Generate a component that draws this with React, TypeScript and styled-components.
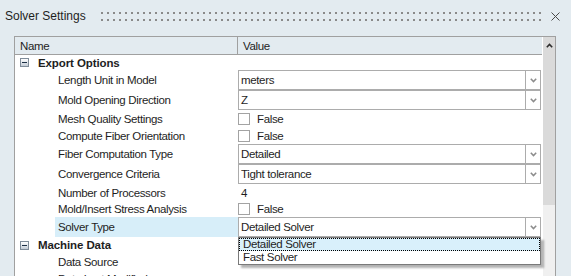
import React from "react";
import styled, { createGlobalStyle } from "styled-components";

const GlobalStyle = createGlobalStyle`
  html, body { margin: 0; padding: 0; }
  body {
    background: #e3ebf0;
    font-family: "Liberation Sans", Arial, sans-serif;
  }
`;

const Window = styled.div`
  width: 571px;
  height: 276px;
  overflow: hidden;
  display: flex;
  flex-direction: column;
  background: #e3ebf0;
`;

const TitleBar = styled.div`
  height: 36px;
  box-sizing: border-box;
  padding: 0 11px 4px 5px;
  display: flex;
  align-items: center;
  flex-shrink: 0;
`;

const Title = styled.span`
  font-size: 12px;
  color: #1e1e1e;
  white-space: nowrap;
`;

const Grip = styled.div`
  flex: 1;
  margin: 0 10px 0 15px;
  display: flex;
  flex-direction: column;
  gap: 5px;
`;

const GripRow = styled.div`
  height: 2px;
  background-image: linear-gradient(to right, #8a8a8a 2px, transparent 2px);
  background-size: 6px 2px;
`;

const CloseButton = styled.button`
  border: none;
  background: transparent;
  padding: 0;
  width: 9px;
  height: 9px;
  display: flex;
  cursor: pointer;
`;

const Panel = styled.div`
  flex: 1;
  min-height: 0;
  margin: 0 15px 0 14px;
  border: 1px solid #a0a0a0;
  border-bottom: none;
  background: #fff;
  display: flex;
  overflow: hidden;
`;

const Grid = styled.div`
  flex: 1;
  display: flex;
  flex-direction: column;
  font-size: 11.5px;
  letter-spacing: -0.35px;
  color: #1e1e1e;
`;

const Header = styled.div`
  height: 18px;
  box-sizing: border-box;
  display: grid;
  grid-template-columns: 223px 1fr;
  background: #e3ebf0;
  border-bottom: 1px solid #a0a0a0;
  flex-shrink: 0;
`;

const HeaderCell = styled.div<{ $divider?: boolean }>`
  display: flex;
  align-items: center;
  padding-left: 5px;
  border-right: ${(p) => (p.$divider ? "1px solid #a0a0a0" : "none")};
  white-space: nowrap;
`;

const CategoryRow = styled.div<{ $h: number }>`
  height: ${(p) => p.$h}px;
  display: flex;
  align-items: center;
  padding-left: 5px;
  gap: 9px;
  flex-shrink: 0;
`;

const CategoryTitle = styled.span`
  font-weight: bold;
  font-size: 11.5px;
  letter-spacing: -0.1px;
`;

const Toggle = styled.span`
  width: 9px;
  height: 9px;
  box-sizing: border-box;
  border: 1px solid #7f8c99;
  background: linear-gradient(#ffffff, #c3ccd6);
  display: flex;
  align-items: center;
  justify-content: center;
  &::before {
    content: "";
    width: 5px;
    height: 1px;
    background: #1c2f45;
  }
`;

const PropRow = styled.div<{ $h: number }>`
  height: ${(p) => p.$h}px;
  display: grid;
  grid-template-columns: 40px 183px 1fr;
  flex-shrink: 0;
`;

const Label = styled.div<{ $selected?: boolean }>`
  grid-column: 2;
  display: flex;
  align-items: center;
  padding-left: 3px;
  white-space: nowrap;
  overflow: hidden;
  background: ${(p) => (p.$selected ? "#d7eef9" : "transparent")};
`;

const ValueCell = styled.div`
  grid-column: 3;
  position: relative;
  display: flex;
  align-items: center;
  padding-right: 1px;
  white-space: nowrap;
`;

const PlainValue = styled.span`
  padding-left: 3px;
`;

const Combo = styled.div`
  flex: 1;
  height: 100%;
  box-sizing: border-box;
  border: 1px solid #acacac;
  background: #fff;
  display: flex;
`;

const ComboText = styled.div`
  flex: 1;
  display: flex;
  align-items: center;
  padding-left: 2px;
`;

const ComboButton = styled.div`
  width: 15px;
  box-sizing: border-box;
  border-left: 1px solid #acacac;
  display: flex;
  align-items: center;
  justify-content: center;
`;

const CheckWrap = styled.div`
  display: flex;
  align-items: center;
  gap: 7px;
`;

const CheckBox = styled.span`
  width: 12px;
  height: 12px;
  box-sizing: border-box;
  border: 1px solid #a3a3a3;
  background: #fff;
`;

const DropList = styled.div`
  position: absolute;
  top: 100%;
  left: 0;
  right: 1px;
  border: 1px solid #7a7a7a;
  background: #fff;
  box-shadow: 3px 3px 2px rgba(0, 0, 0, 0.3);
  z-index: 2;
`;

const DropItem = styled.div<{ $active?: boolean }>`
  height: 13px;
  box-sizing: border-box;
  line-height: 11px;
  padding-left: 3px;
  border: 1px dotted ${(p) => (p.$active ? "#000" : "transparent")};
  background: ${(p) => (p.$active ? "#d9f0fb" : "transparent")};
`;

const Scrollbar = styled.div`
  width: 12px;
  margin-left: 1px;
  display: flex;
  flex-direction: column;
  background: #f0f0f0;
`;

const ScrollButton = styled.div`
  height: 17px;
  background: #dadada;
  display: flex;
  align-items: center;
  justify-content: center;
`;

const ScrollThumb = styled.div`
  height: 151px;
  background: #dadada;
`;

const DownArrow = () => (
  <svg width="7" height="5" viewBox="0 0 7 5">
    <polyline points="0.8,0.8 3.5,3.6 6.2,0.8" fill="none" stroke="#8c8c8c" strokeWidth="1.5" />
  </svg>
);

const UpArrow = () => (
  <svg width="7" height="5" viewBox="0 0 7 5">
    <polyline points="0.8,4.2 3.5,1.4 6.2,4.2" fill="none" stroke="#2d2d2d" strokeWidth="1.6" />
  </svg>
);

const ComboBox = ({ value }: { value: string }) => (
  <Combo>
    <ComboText>{value}</ComboText>
    <ComboButton>
      <DownArrow />
    </ComboButton>
  </Combo>
);

const Check = ({ label }: { label: string }) => (
  <CheckWrap>
    <CheckBox />
    <span>{label}</span>
  </CheckWrap>
);

export default function App() {
  return (
    <>
      <GlobalStyle />
      <Window>
        <TitleBar>
          <Title>Solver Settings</Title>
          <Grip>
            <GripRow />
            <GripRow />
          </Grip>
          <CloseButton aria-label="Close">
            <svg width="9" height="9" viewBox="0 0 9 9">
              <path d="M0.5 0.5 L8.5 8.5 M8.5 0.5 L0.5 8.5" stroke="#4a4a4a" strokeWidth="1" />
            </svg>
          </CloseButton>
        </TitleBar>
        <Panel>
          <Grid>
            <Header>
              <HeaderCell $divider>Name</HeaderCell>
              <HeaderCell>Value</HeaderCell>
            </Header>
            <CategoryRow $h={15}>
              <Toggle />
              <CategoryTitle>Export Options</CategoryTitle>
            </CategoryRow>
            <PropRow $h={20}>
              <Label>Length Unit in Model</Label>
              <ValueCell>
                <ComboBox value="meters" />
              </ValueCell>
            </PropRow>
            <PropRow $h={20}>
              <Label>Mold Opening Direction</Label>
              <ValueCell>
                <ComboBox value="Z" />
              </ValueCell>
            </PropRow>
            <PropRow $h={17}>
              <Label>Mesh Quality Settings</Label>
              <ValueCell>
                <Check label="False" />
              </ValueCell>
            </PropRow>
            <PropRow $h={17}>
              <Label>Compute Fiber Orientation</Label>
              <ValueCell>
                <Check label="False" />
              </ValueCell>
            </PropRow>
            <PropRow $h={20}>
              <Label>Fiber Computation Type</Label>
              <ValueCell>
                <ComboBox value="Detailed" />
              </ValueCell>
            </PropRow>
            <PropRow $h={20}>
              <Label>Convergence Criteria</Label>
              <ValueCell>
                <ComboBox value="Tight tolerance" />
              </ValueCell>
            </PropRow>
            <PropRow $h={17}>
              <Label>Number of Processors</Label>
              <ValueCell>
                <PlainValue>4</PlainValue>
              </ValueCell>
            </PropRow>
            <PropRow $h={16}>
              <Label>Mold/Insert Stress Analysis</Label>
              <ValueCell>
                <Check label="False" />
              </ValueCell>
            </PropRow>
            <PropRow $h={20}>
              <Label $selected>Solver Type</Label>
              <ValueCell>
                <ComboBox value="Detailed Solver" />
                <DropList>
                  <DropItem $active>Detailed Solver</DropItem>
                  <DropItem>Fast Solver</DropItem>
                </DropList>
              </ValueCell>
            </PropRow>
            <CategoryRow $h={16}>
              <Toggle />
              <CategoryTitle>Machine Data</CategoryTitle>
            </CategoryRow>
            <PropRow $h={17}>
              <Label>Data Source</Label>
            </PropRow>
            <PropRow $h={17}>
              <Label>Data Last Modified</Label>
            </PropRow>
          </Grid>
          <Scrollbar>
            <ScrollButton>
              <UpArrow />
            </ScrollButton>
            <ScrollThumb />
          </Scrollbar>
        </Panel>
      </Window>
    </>
  );
}
